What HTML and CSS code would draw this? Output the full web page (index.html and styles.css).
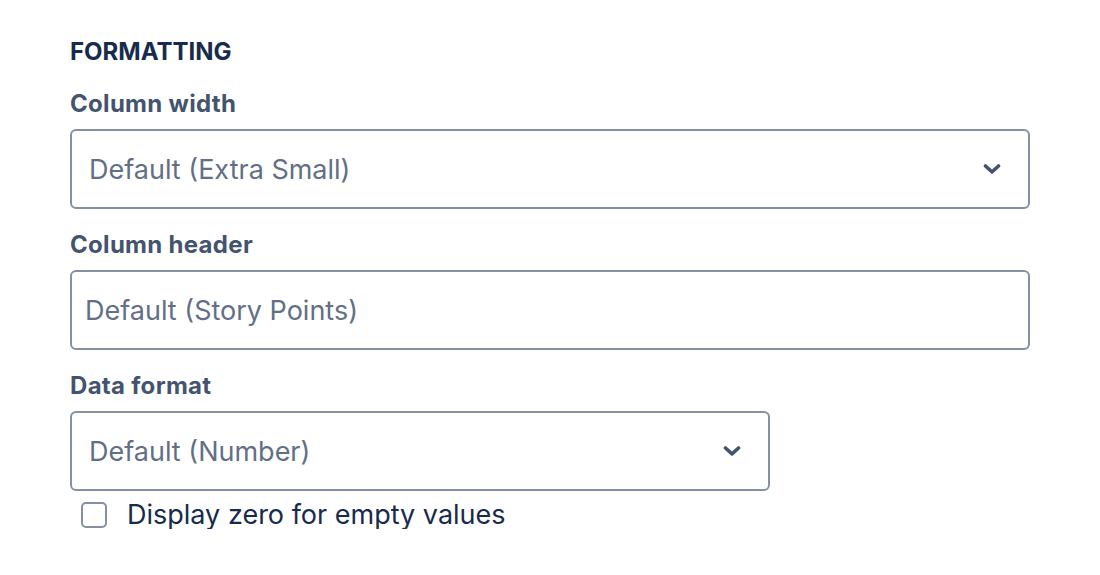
FILE: index.html
```html
<!DOCTYPE html>
<html>
<head>
<meta charset="utf-8">
<link rel="stylesheet" href="styles.css">
</head>
<body>
<div class="panel">
  <h2 class="heading">FORMATTING</h2>
  <div class="field">
    <label class="label">Column width</label>
    <div class="select wide">
      <span class="value">Default (Extra Small)</span>
      <svg class="chev" width="18" height="10" viewBox="0 0 18 10"><path d="M2.5 2 L9 7.8 L15.5 2" fill="none" stroke="#44546f" stroke-width="3.6" stroke-linecap="round" stroke-linejoin="round"/></svg>
    </div>
  </div>
  <div class="field">
    <label class="label">Column header</label>
    <div class="input wide">
      <span class="value">Default (Story Points)</span>
    </div>
  </div>
  <div class="field">
    <label class="label">Data format</label>
    <div class="select narrow">
      <span class="value">Default (Number)</span>
      <svg class="chev" width="18" height="10" viewBox="0 0 18 10"><path d="M2.5 2 L9 7.8 L15.5 2" fill="none" stroke="#44546f" stroke-width="3.6" stroke-linecap="round" stroke-linejoin="round"/></svg>
    </div>
  </div>
  <div class="check-row">
    <span class="checkbox"></span>
    <span class="check-label">Display zero for empty values</span>
  </div>
</div>
</body>
</html>
```

FILE: styles.css
```css
html, body {
  margin: 0;
  padding: 0;
  background: #ffffff;
}
body {
  font-family: Inter, "Liberation Sans", sans-serif;
}
.panel {
  padding: 36px 70px 0 70px;
  width: 960px;
}
.heading {
  margin: 0;
  font-size: 24px;
  line-height: 32px;
  font-weight: 700;
  color: #172b4d;
}
.field {
  margin-top: 20px;
  display: flex;
  flex-direction: column;
  gap: 9px;
}
.label {
  font-size: 24px;
  line-height: 32px;
  font-weight: 700;
  color: #44546f;
  letter-spacing: 0.3px;
}
.select, .input {
  box-sizing: border-box;
  height: 80px;
  border: 2px solid #8590a2;
  border-radius: 6px;
  display: flex;
  align-items: center;
  justify-content: space-between;
  font-size: 27px;
  color: #626f86;
}
.select {
  padding: 0 27px 0 17px;
}
.input {
  padding: 0 13px;
}
.wide {
  width: 960px;
}
.narrow {
  width: 700px;
}
.chev {
  display: block;
}
.check-row {
  display: flex;
  align-items: center;
  gap: 20px;
  margin-top: 10px;
  padding-left: 11px;
}
.checkbox {
  box-sizing: border-box;
  width: 26px;
  height: 26px;
  border: 2px solid #8590a2;
  border-radius: 5px;
}
.check-label {
  font-size: 27px;
  line-height: 28px;
  color: #172b4d;
}
```
